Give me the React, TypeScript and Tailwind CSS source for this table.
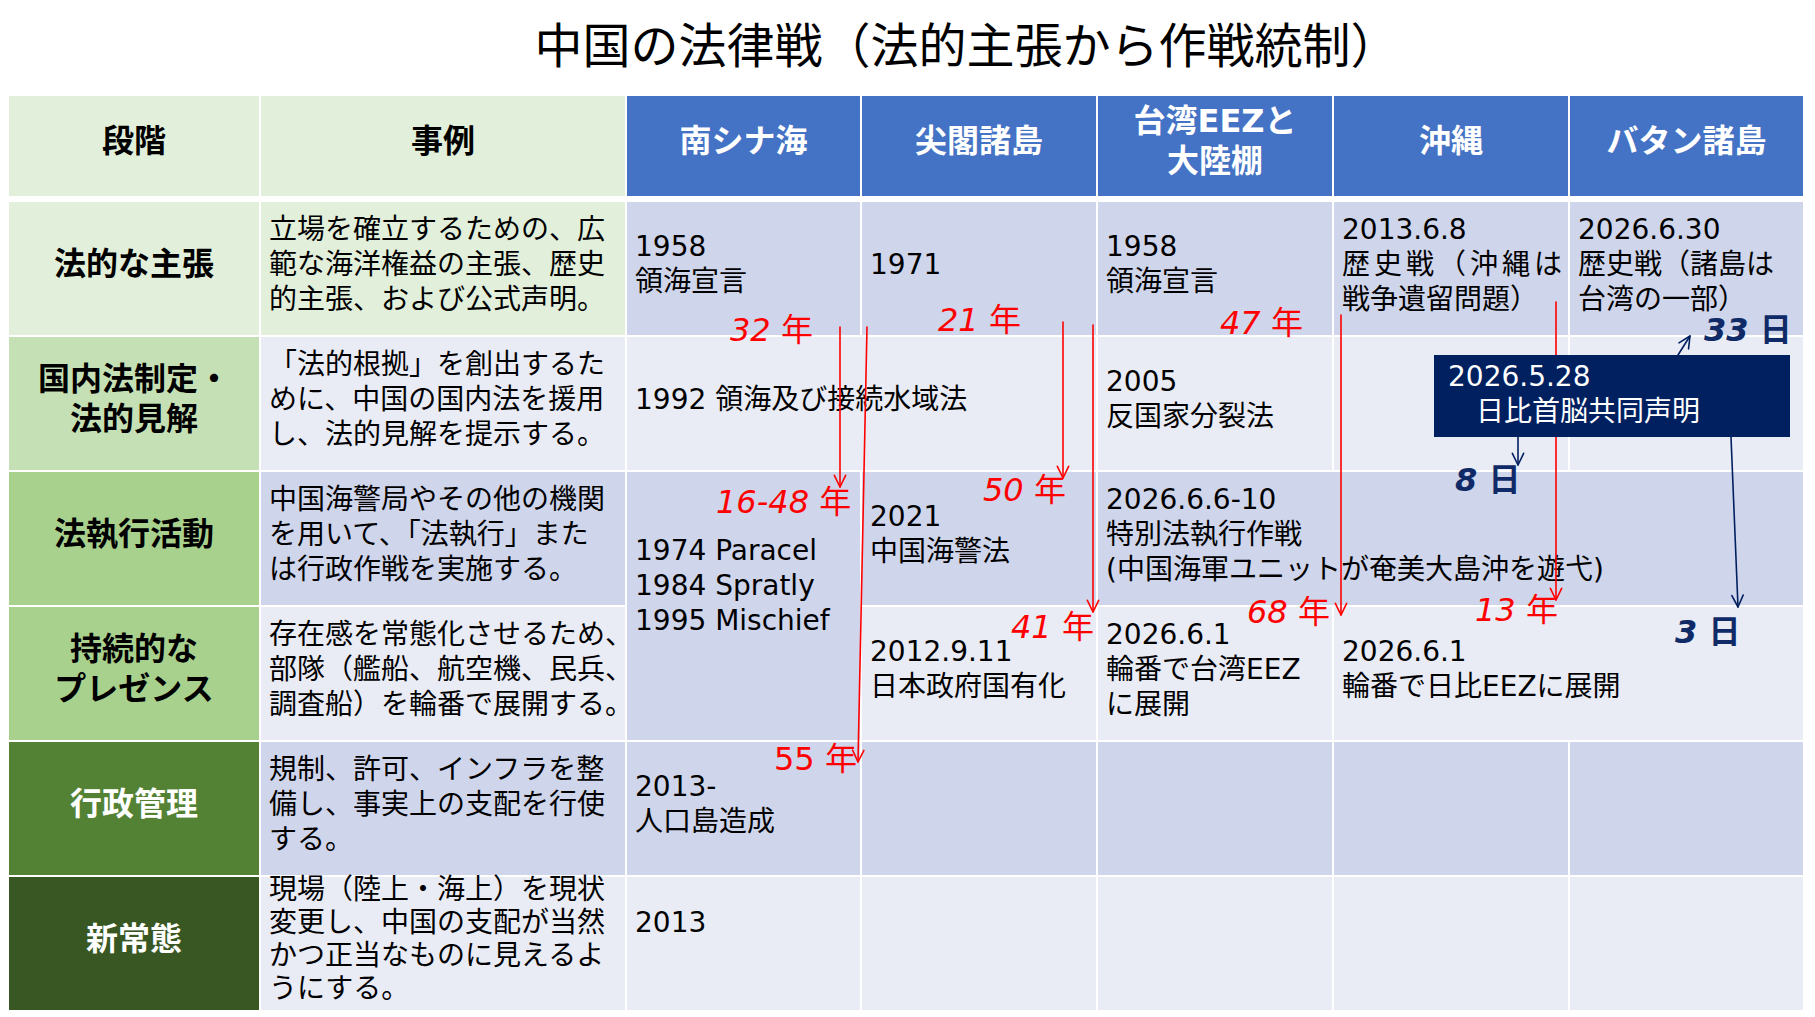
import clsx from 'clsx';
import type { ReactNode } from 'react';

const FONT = "font-['DejaVu_Sans','Noto_Sans_CJK_JP',sans-serif]";
const COLS = 'grid grid-cols-[250px_364px_233px_234px_234px_234px_233px] gap-x-[2px]';

function Lines({ lines }: { lines: ReactNode[] })
{
    return (
    <>
      {lines.map((l, i) => (
        <span key={i} className="block whitespace-nowrap">{l}</span>
      ))}
    </>
    );
}

function Stage({ lines, bg, light }: { lines: string[]; bg: string; light?: boolean })
{
    return (
    <div
      className={clsx(
        'flex flex-col items-center justify-center pb-[9px] text-center text-[32px] font-bold leading-[40px]',
        bg,
        light ? 'text-white' : 'text-black'
      )}
    >
      <Lines lines={lines} />
    </div>
    );
}

function Desc({ lines, bg, tight }: { lines: string[]; bg: string; tight?: boolean })
{
    return (
    <div
      className={clsx(
        'flex flex-col justify-center pb-[9px] pl-[8px] text-[28px] text-black',
        tight ? 'leading-[33px]' : 'leading-[35px]',
        bg
      )}
    >
      <Lines lines={lines} />
    </div>
    );
}

// Data cell; odd rows are the darker lavender
function Data({
    lines = [],
    even,
    className,
    pad = 'pb-[9px]'
}: {
    lines?: ReactNode[];
    even?: boolean;
    className?: string;
    pad?: string;
})
{
    return (
    <div
      className={clsx(
        'flex flex-col pl-[8px] text-[28px] leading-[35px] text-black',
        even ? 'bg-[#e9ebf5]' : 'bg-[#cfd5ea]',
        pad,
        className ?? 'justify-center'
      )}
    >
      <Lines lines={lines} />
    </div>
    );
}

function Head({ children, blue }: { children: ReactNode; blue?: boolean })
{
    return (
    <div
      className={clsx(
        'flex flex-col items-center justify-center pb-[10px]',
        blue ? 'bg-[#4472c4] text-white' : 'bg-[#e2efda] text-black'
      )}
    >
      {children}
    </div>
    );
}

type Note = { n: string; x: number; base: number; italic?: boolean };

const redNotes: Note[] = [
    { n: '32', x: 730, base: 340, italic: true },
    { n: '21', x: 938, base: 330, italic: true },
    { n: '47', x: 1220, base: 333, italic: true },
    { n: '16-48', x: 716, base: 512, italic: true },
    { n: '50', x: 983, base: 500, italic: true },
    { n: '41', x: 1011, base: 637, italic: true },
    { n: '68', x: 1247, base: 622, italic: true },
    { n: '13', x: 1475, base: 620, italic: true },
    { n: '55', x: 774, base: 769 }
];

const blueNotes: Note[] = [
    { n: '33', x: 1704, base: 340 },
    { n: '8', x: 1455, base: 490 },
    { n: '3', x: 1675, base: 642 }
];

function Arrow({ x1, y1, x2, y2, color }: { x1: number; y1: number; x2: number; y2: number; color: string })
{
    const a = Math.atan2(y2 - y1, x2 - x1);
    const len = 13;
    const spread = 0.45;
    const p1 = [x2 - len * Math.cos(a - spread), y2 - len * Math.sin(a - spread)];
    const p2 = [x2 - len * Math.cos(a + spread), y2 - len * Math.sin(a + spread)];
    return (
    <g stroke={color} strokeWidth={1.6} fill="none" strokeLinecap="round" strokeLinejoin="round">
      <line x1={x1} y1={y1} x2={x2} y2={y2} />
      <polyline points={`${ p1[0] },${ p1[1] } ${ x2 },${ y2 } ${ p2[0] },${ p2[1] }`} />
    </g>
    );
}

export default function App()
{
    return (
    <div className={clsx('relative h-[1017px] w-[1815px] overflow-hidden bg-white', FONT)}>
      {/* title */}
      <div className="flex h-[96px] items-center justify-center pb-[4px] pl-[118px] text-[48px] leading-none text-black">
        中国の法律戦（法的主張から作戦統制）
      </div>

      <div className="ml-[9px] w-[1794px]">
        {/* header */}
        <div className={clsx(COLS, 'h-[100px] text-[32px] font-bold leading-[40px]')}>
          <Head>段階</Head>
          <Head>事例</Head>
          <Head blue>南シナ海</Head>
          <Head blue>尖閣諸島</Head>
          <Head blue>
            <span>台湾EEZと</span>
            <span>大陸棚</span>
          </Head>
          <Head blue>沖縄</Head>
          <Head blue>バタン諸島</Head>
        </div>

        {/* body */}
        <div className={clsx(COLS, 'mt-[6px] grid-rows-[repeat(6,133px)] gap-y-[2px]')}>
          {/* 法的な主張 */}
          <Stage lines={['法的な主張']} bg="bg-[#e2efda]" />
          <Desc
            bg="bg-[#e2efda]"
            lines={['立場を確立するための、広', '範な海洋権益の主張、歴史', '的主張、および公式声明。']}
          />
          <Data lines={['1958', '領海宣言']} />
          <Data lines={['1971']} />
          <Data lines={['1958', '領海宣言']} />
          <Data
            lines={['2013.6.8', <span className="tracking-[4px]">歴史戦（沖縄は</span>, '戦争遺留問題）']}
          />
          <Data lines={['2026.6.30', '歴史戦（諸島は', '台湾の一部）']} />

          {/* 国内法制定・法的見解 */}
          <Stage lines={['国内法制定・', '法的見解']} bg="bg-[#c5e0b4]" />
          <Desc
            bg="bg-[#e9ebf5]"
            lines={['「法的根拠」を創出するた', 'めに、中国の国内法を援用', 'し、法的見解を提示する。']}
          />
          <Data even className="col-span-2 justify-center" lines={['1992 領海及び接続水域法']} />
          <Data even lines={['2005', '反国家分裂法']} />
          <Data even />
          <Data even />

          {/* 法執行活動 */}
          <Stage lines={['法執行活動']} bg="bg-[#a9d18e]" />
          <Desc
            bg="bg-[#cfd5ea]"
            lines={['中国海警局やその他の機関', 'を用いて、「法執行」また', 'は行政作戦を実施する。']}
          />
          <Data
            className="row-span-2 justify-start"
            pad="pt-[61px]"
            lines={['1974 Paracel', '1984 Spratly', '1995 Mischief']}
          />
          <Data lines={['2021', '中国海警法']} />
          <Data
            className="col-span-3 justify-center"
            lines={['2026.6.6-10', '特別法執行作戦', '(中国海軍ユニットが奄美大島沖を遊弋)']}
          />

          {/* 持続的なプレゼンス */}
          <Stage lines={['持続的な', 'プレゼンス']} bg="bg-[#a9d18e]" />
          <Desc
            bg="bg-[#e9ebf5]"
            lines={['存在感を常態化させるため、', '部隊（艦船、航空機、民兵、', '調査船）を輪番で展開する。']}
          />
          <Data even lines={['2012.9.11', '日本政府国有化']} />
          <Data even lines={['2026.6.1', '輪番で台湾EEZ', 'に展開']} />
          <Data even className="col-span-2 justify-center" lines={['2026.6.1', '輪番で日比EEZに展開']} />

          {/* 行政管理 */}
          <Stage lines={['行政管理']} bg="bg-[#548235]" light />
          <Desc
            bg="bg-[#cfd5ea]"
            lines={['規制、許可、インフラを整', '備し、事実上の支配を行使', 'する。']}
          />
          <Data pad="pb-[10px]" lines={['2013-', '人口島造成']} />
          <Data />
          <Data />
          <Data />
          <Data />

          {/* 新常態 */}
          <Stage lines={['新常態']} bg="bg-[#385723]" light />
          <Desc
            bg="bg-[#e9ebf5]"
            tight
            lines={['現場（陸上・海上）を現状', '変更し、中国の支配が当然', 'かつ正当なものに見えるよ', 'うにする。']}
          />
          <Data even pad="pb-[42px]" lines={['2013']} />
          <Data even />
          <Data even />
          <Data even />
          <Data even />
        </div>
      </div>

      {/* annotation arrows drawn over the table */}
      <svg className="pointer-events-none absolute left-0 top-0" width={1815} height={1017}>
        <Arrow x1={840} y1={327} x2={840} y2={487} color="#ff0000" />
        <Arrow x1={867} y1={327} x2={858} y2={762} color="#ff0000" />
        <Arrow x1={1063} y1={322} x2={1063} y2={478} color="#ff0000" />
        <Arrow x1={1093} y1={325} x2={1093} y2={612} color="#ff0000" />
        <Arrow x1={1341} y1={315} x2={1341} y2={615} color="#ff0000" />
        <Arrow x1={1556} y1={302} x2={1556} y2={600} color="#ff0000" />
        <Arrow x1={1518} y1={437} x2={1518} y2={465} color="#002060" />
        <Arrow x1={1678} y1={355} x2={1690} y2={336} color="#002060" />
        <Arrow x1={1731} y1={437} x2={1738} y2={607} color="#002060" />
      </svg>

      {/* 日比首脳共同声明 callout */}
      <div className="absolute left-[1434px] top-[355px] flex h-[82px] w-[356px] flex-col justify-center bg-[#002060] pb-[5px] pl-[14px] text-[28px] leading-[35px] text-white">
        <span className="whitespace-nowrap">2026.5.28</span>
        <span className="whitespace-nowrap">　日比首脳共同声明</span>
      </div>

      {redNotes.map((n) => (
        <span
          key={n.n}
          className="absolute whitespace-nowrap text-[32px] leading-[28px] text-[#ff0000]"
          style={{ left: n.x, top: n.base - 24 }}
        >
          <span className={n.italic ? 'italic' : ''}>{n.n}</span> 年
        </span>
      ))}
      {blueNotes.map((n) => (
        <span
          key={n.n}
          className="absolute whitespace-nowrap text-[32px] font-bold leading-[28px] text-[#0f2a66]"
          style={{ left: n.x, top: n.base - 24 }}
        >
          <span className="italic">{n.n}</span> 日
        </span>
      ))}
    </div>
    );
}
